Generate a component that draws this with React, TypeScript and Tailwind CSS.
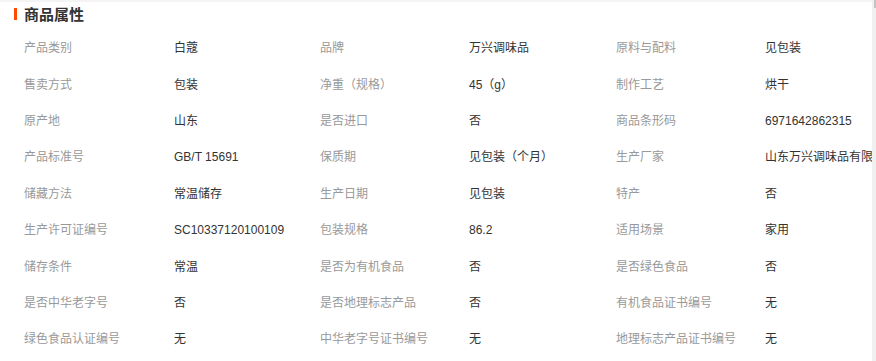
const rows: [string, string, string, string, string, string][] = [
  ["产品类别", "白蔻", "品牌", "万兴调味品", "原料与配料", "见包装"],
  ["售卖方式", "包装", "净重（规格）", "45（g）", "制作工艺", "烘干"],
  ["原产地", "山东", "是否进口", "否", "商品条形码", "6971642862315"],
  ["产品标准号", "GB/T 15691", "保质期", "见包装（个月）", "生产厂家", "山东万兴调味品有限公司"],
  ["储藏方法", "常温储存", "生产日期", "见包装", "特产", "否"],
  ["生产许可证编号", "SC10337120100109", "包装规格", "86.2", "适用场景", "家用"],
  ["储存条件", "常温", "是否为有机食品", "否", "是否绿色食品", "否"],
  ["是否中华老字号", "否", "是否地理标志产品", "否", "有机食品证书编号", "无"],
  ["绿色食品认证编号", "无", "中华老字号证书编号", "无", "地理标志产品证书编号", "无"],
];

export default function App() {
  return (
    <div className="flex w-[876px] h-[361px] bg-white overflow-hidden font-['Liberation_Sans','Noto_Sans_CJK_SC',sans-serif]">
      <div className="w-[872px] overflow-hidden border-t-2 border-[#f4f4f4]">
        {/* section title */}
        <div className="flex items-center h-[24px] pl-[14px]">
          <span className="w-[3px] h-[12px] bg-[#ff4a00] mr-[7px]" />
          <h2 className="text-[15px] font-bold text-[#333] leading-none">商品属性</h2>
        </div>

        <div className="flex flex-col pt-[4px]">
          {rows.map((r, i) => (
            <div key={i} className="flex items-center h-[36.4px] text-[12px] whitespace-nowrap">
              <span className="w-[174px] shrink-0 pl-[24px] text-[#999]">{r[0]}</span>
              <span className="w-[146px] shrink-0 text-[#333]">{r[1]}</span>
              <span className="w-[149px] shrink-0 text-[#999]">{r[2]}</span>
              <span className="w-[147px] shrink-0 text-[#333]">{r[3]}</span>
              <span className="w-[149px] shrink-0 text-[#999]">{r[4]}</span>
              <span className="shrink-0 text-[#333]">{r[5]}</span>
            </div>
          ))}
        </div>
      </div>

      {/* scrollbar */}
      <div className="w-[4px] h-full bg-[#f0f0f0]">
        <div className="ml-[2px] w-[2px] h-[8px] bg-[#c4c4c4]" />
      </div>
    </div>
  );
}
